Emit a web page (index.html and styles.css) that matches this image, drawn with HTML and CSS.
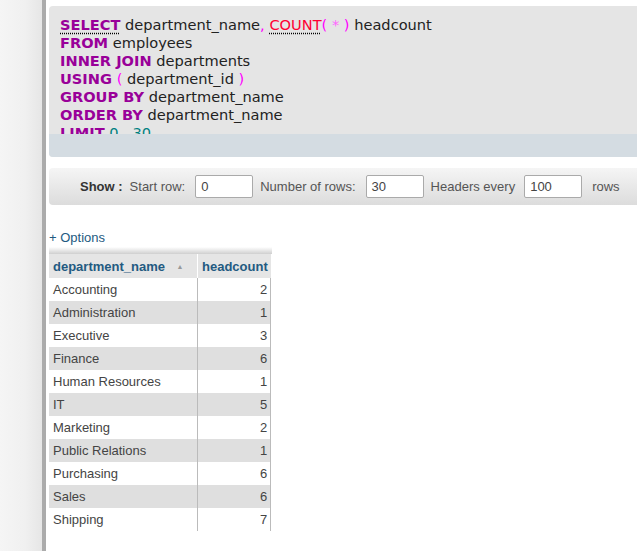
FILE: index.html
```html
<!DOCTYPE html>
<html>
<head>
<meta charset="utf-8">
<link rel="stylesheet" href="styles.css">
</head>
<body>
<div class="sidebar"></div>
<div class="divider"></div>
<div class="main">
  <div class="sqlbox">
    <div class="code">
      <div class="line"><span class="kw u">SELECT</span> department_name<span class="pn">,</span> <span class="fn u">COUNT</span><span class="pn">(</span> <span class="st">*</span> <span class="pn">)</span> headcount</div>
      <div class="line"><span class="kw">FROM</span> employees</div>
      <div class="line"><span class="kw">INNER JOIN</span> departments</div>
      <div class="line"><span class="kw">USING</span> <span class="pn">(</span> department_id <span class="pn">)</span></div>
      <div class="line"><span class="kw">GROUP BY</span> department_name</div>
      <div class="line"><span class="kw">ORDER BY</span> department_name</div>
      <div class="line"><span class="kw">LIMIT</span> <span class="num">0</span> <span class="pn">,</span> <span class="num">30</span></div>
    </div>
    <div class="strip"></div>
  </div>

  <div class="showbar">
    <span class="lbl-show">Show :</span>
    <span class="lbl">Start row:</span>
    <span class="inp">0</span>
    <span class="lbl">Number of rows:</span>
    <span class="inp">30</span>
    <span class="lbl lbl-hdr">Headers every</span>
    <span class="inp inp-last">100</span>
    <span class="lbl">rows</span>
  </div>

  <div class="options">+ Options</div>

  <div class="tablewrap">
    <div class="fade"></div>
    <table class="result">
      <thead>
        <tr><th class="c1">department_name <span class="arrow">&#9650;</span></th><th class="c2">headcount</th></tr>
      </thead>
      <tbody>
        <tr><td>Accounting</td><td class="n">2</td></tr>
        <tr><td>Administration</td><td class="n">1</td></tr>
        <tr><td>Executive</td><td class="n">3</td></tr>
        <tr><td>Finance</td><td class="n">6</td></tr>
        <tr><td>Human Resources</td><td class="n">1</td></tr>
        <tr><td>IT</td><td class="n">5</td></tr>
        <tr><td>Marketing</td><td class="n">2</td></tr>
        <tr><td>Public Relations</td><td class="n">1</td></tr>
        <tr><td>Purchasing</td><td class="n">6</td></tr>
        <tr><td>Sales</td><td class="n">6</td></tr>
        <tr><td>Shipping</td><td class="n">7</td></tr>
      </tbody>
    </table>
  </div>
</div>
</body>
</html>
```

FILE: styles.css
```css
html, body {
  margin: 0;
  padding: 0;
  height: 100%;
  background: #fff;
}
body {
  display: flex;
  overflow: hidden;
  font-family: "Liberation Sans", Arial, sans-serif;
}
.sidebar {
  width: 42px;
  flex: none;
  background: linear-gradient(to right, #f5f5f5, #f0f0f0 60%, #e6e6e6);
}
.divider {
  width: 4px;
  flex: none;
  background: #ababab;
}
.main {
  flex: 1;
  min-width: 0;
  overflow: hidden;
  padding-left: 3px;
}
.sqlbox {
  margin-top: 6px;
  width: 640px;
  background: #e5e5e5;
  border-radius: 4px 0 0 4px;
  overflow: hidden;
}
.code {
  height: 118px;
  padding: 10px 0 0 11px;
  overflow: hidden;
  font-family: "DejaVu Sans", Verdana, sans-serif;
  font-size: 14.6px;
  color: #222;
}
.line {
  height: 18px;
  line-height: 18px;
  white-space: nowrap;
}
.kw { color: #990099; font-weight: bold; }
.fn { color: #ff0033; }
.pn { color: #ff00ff; }
.st { color: #ff66ff; }
.num { color: #008080; }
.u {
  text-decoration: underline dotted #000;
  text-underline-offset: 3px;
}
.strip {
  height: 23px;
  background: #d4dce2;
}
.showbar {
  margin-top: 11px;
  width: 640px;
  height: 37px;
  box-sizing: border-box;
  display: flex;
  align-items: center;
  padding-left: 31px;
  background: linear-gradient(#f5f5f5, #dcdcdc);
  border-radius: 4px 0 0 4px;
  font-size: 13px;
  color: #555;
  white-space: nowrap;
}
.lbl-show {
  font-weight: bold;
  color: #333;
  margin-right: 7px;
}
.lbl { margin-right: 10px; }
.lbl-hdr { margin-right: 9px; }
.inp {
  width: 58px;
  height: 23px;
  box-sizing: border-box;
  border: 1px solid #aaa;
  border-radius: 2px;
  background: #fff;
  padding-left: 5px;
  line-height: 21px;
  color: #444;
  margin-right: 7px;
}
.inp-last { margin-right: 10px; }
.options {
  margin-top: 26px;
  font-size: 13px;
  color: #235a81;
  line-height: 14px;
}
.tablewrap {
  margin-top: 2px;
}
.fade {
  width: 223px;
  height: 7px;
  background: linear-gradient(#fff, #cfcfcf);
}
.result {
  border-collapse: collapse;
  font-size: 13px;
  color: #444;
}
.result th {
  height: 24px;
  padding: 0 3px 0 4px;
  background: #e5e5e5;
  color: #235a81;
  font-weight: bold;
  text-align: left;
  white-space: nowrap;
}
.result th.c1 { width: 141px; border-right: 1px solid #fff; }
.arrow {
  font-size: 7px;
  color: #999;
  margin-left: 8px;
  vertical-align: 2px;
}
.result td {
  height: 23px;
  padding: 0 3px 0 4px;
  white-space: nowrap;
}
.result td:first-child { border-right: 1px solid #bbb; }
.result td.n { text-align: right; border-right: 1px solid #bbb; }
.result tbody tr:nth-child(even) { background: #dfdfdf; }
```
